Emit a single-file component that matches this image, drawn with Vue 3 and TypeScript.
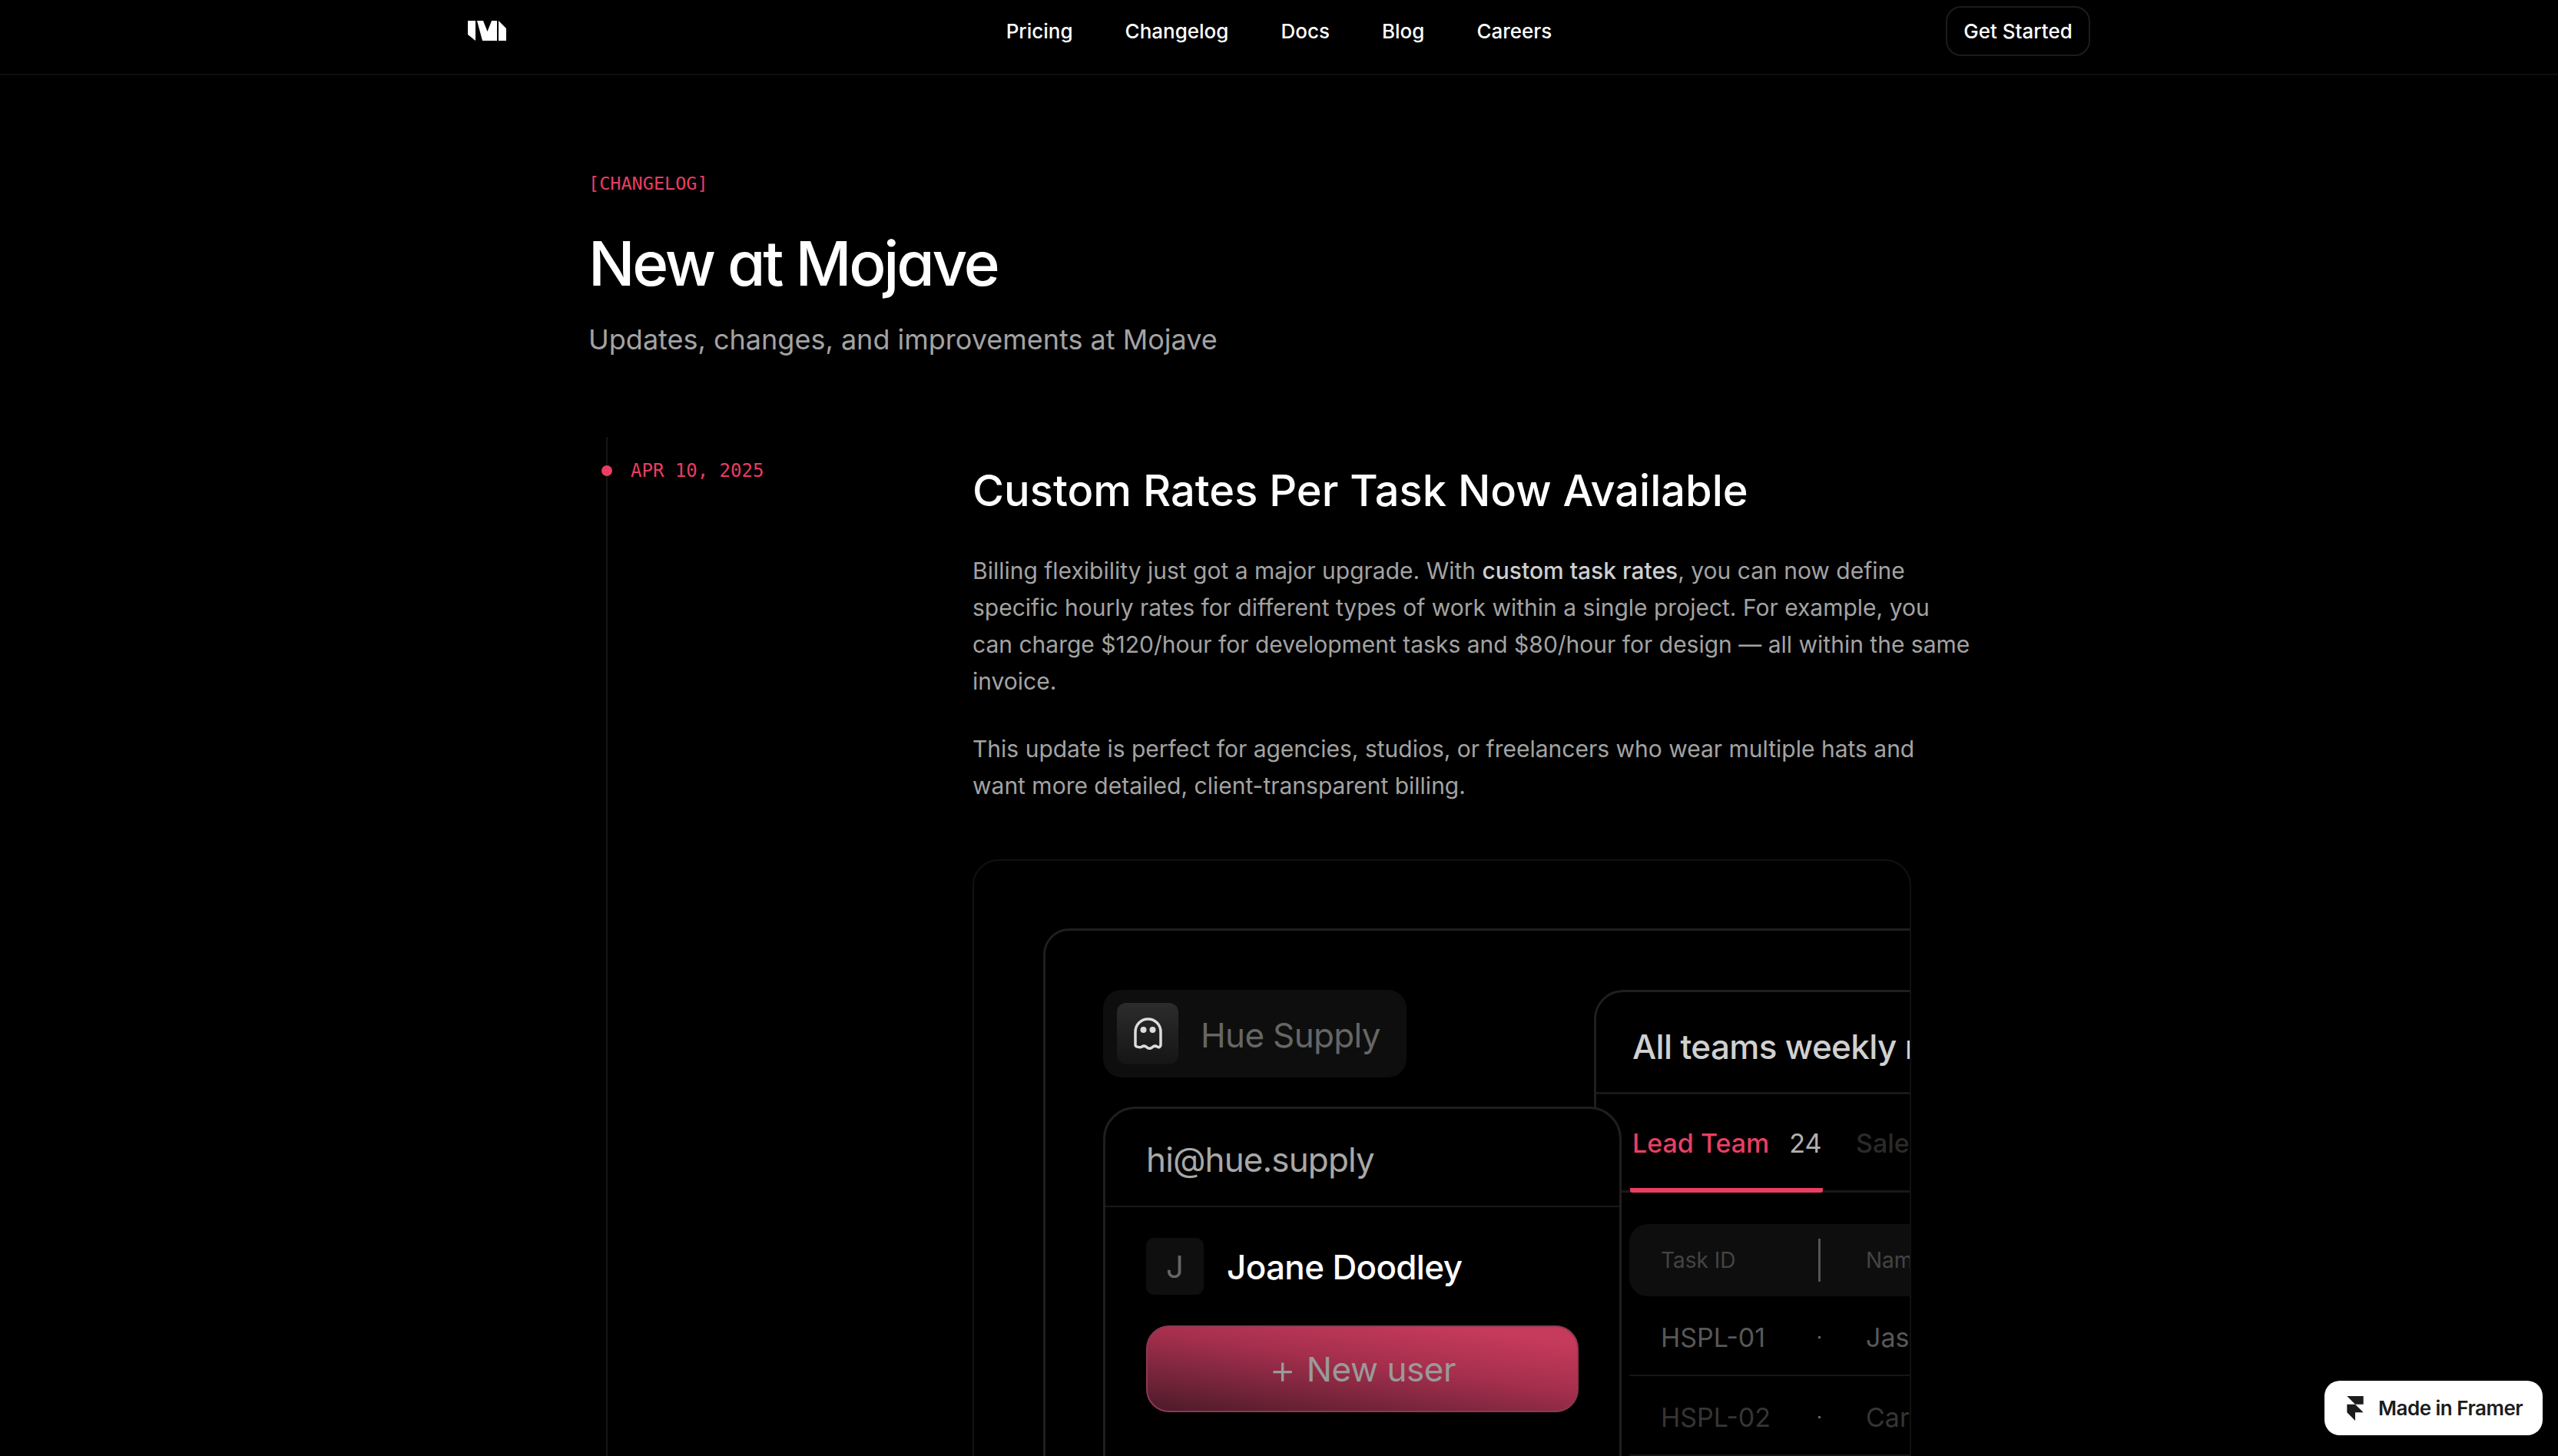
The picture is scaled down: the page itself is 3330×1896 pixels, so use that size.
<script setup lang="ts">
const navLinks: string[] = ['Pricing', 'Changelog', 'Docs', 'Blog', 'Careers'];

const rows: Array<{ id: string; name: string; dim: boolean }> = [
  { id: 'HSPL-01', name: 'Jasmine', dim: false },
  { id: 'HSPL-02', name: 'Carla', dim: true },
];
</script>

<template>
  <div class="page">
    <header class="topbar">
      <div class="topbar-inner">
        <svg class="logo" viewBox="0 0 50 26" aria-label="Mojave">
          <path d="M0 0h10v26L0 18z" />
          <path d="M12 0h8l5.500 14L31 0h7v26H19z" />
          <path d="M40 0l10 10v16H40z" />
        </svg>
        <nav class="nav">
          <a v-for="link in navLinks" :key="link" class="nav-link">{{ link }}</a>
        </nav>
        <a class="cta">Get Started</a>
      </div>
    </header>

    <main class="content">
      <p class="eyebrow">[CHANGELOG]</p>
      <h1 class="title">New at Mojave</h1>
      <p class="subtitle">Updates, changes, and improvements at Mojave</p>

      <section class="entry">
        <div class="timeline">
          <span class="dot"></span>
          <span class="date">APR 10, 2025</span>
        </div>

        <article class="post">
          <h2 class="post-title">Custom Rates Per Task Now Available</h2>
          <p class="post-text">
            Billing flexibility just got a major upgrade. With <strong>custom task rates</strong>, you can now define
            specific hourly rates for different types of work within a single project. For example, you
            can charge $120/hour for development tasks and $80/hour for design — all within the same
            invoice.
          </p>
          <p class="post-text">
            This update is perfect for agencies, studios, or freelancers who wear multiple hats and
            want more detailed, client-transparent billing.
          </p>

          <div class="shot">
            <div class="panel">
              <div class="side">
                <div class="brand">
                  <span class="brand-icon">
                    <svg viewBox="0 0 37 42" width="37" height="42" fill="none">
                      <path
                        d="M2 36V18.500C2 9.400 9.400 2 18.500 2S35 9.400 35 18.500V36c0 2.200-2.400 3.400-4.200 2.200-1.800-1.300-4.200-1.300-6 0l-1 .8c-2 1.500-4.600 1.500-6.600 0l-1-.8c-1.800-1.300-4.200-1.300-6 0C8.400 39.400 2 38.200 2 36z"
                        stroke="#dcdcdc"
                        stroke-width="3.500"
                        stroke-linejoin="round"
                      />
                      <circle cx="12.500" cy="16" r="4" fill="#dcdcdc" />
                      <circle cx="24.500" cy="16" r="4" fill="#dcdcdc" />
                    </svg>
                  </span>
                  <span class="brand-name">Hue Supply</span>
                </div>

                <div class="user-card">
                  <div class="user-mail">hi@hue.supply</div>
                  <div class="user-body">
                    <div class="user-row">
                      <span class="avatar">J</span>
                      <span class="user-name">Joane Doodley</span>
                    </div>
                    <div class="new-user"><span class="plus">+</span> New user</div>
                  </div>
                </div>
              </div>

              <div class="report">
                <div class="report-title">All teams weekly report</div>
                <div class="tabs">
                  <div class="tab-active">
                    <span class="tab-label">Lead Team</span>
                    <span class="tab-count">24</span>
                  </div>
                  <span class="tab-other">Sales Team</span>
                </div>
                <div class="table">
                  <div class="table-head">
                    <span class="col-id">Task ID</span>
                    <span class="col-sep"></span>
                    <span class="col-name">Name</span>
                  </div>
                  <div v-for="row in rows" :key="row.id" class="table-row" :class="{ dim: row.dim }">
                    <span class="col-id">{{ row.id }}</span>
                    <span class="col-point"></span>
                    <span class="col-name">{{ row.name }}</span>
                  </div>
                </div>
              </div>
            </div>
          </div>
        </article>
      </section>
    </main>

    <a class="badge">
      <svg viewBox="0 0 14 21" width="22" height="32" fill="#1c1c1c">
        <path d="M0 0h14v7H7z" />
        <path d="M0 7h7l7 7H7v7l-7-7z" />
      </svg>
      <span>Made in Framer</span>
    </a>
  </div>
</template>

<style>
html,
body {
  margin: 0;
  background: #000;
}
</style>

<style scoped>
.page {
  position: relative;
  height: 1896px;
  overflow: hidden;
  background: #000;
  color: #fff;
  font-family: Inter, 'Noto Sans', sans-serif;
}

.topbar {
  height: 96px;
  border-bottom: 2px solid #0f0f0f;
}
.topbar-inner {
  width: 2112px;
  height: 100%;
  margin: 0 auto;
  display: grid;
  grid-template-columns: 1fr auto 1fr;
  align-items: center;
  padding-bottom: 16px;
  box-sizing: border-box;
}
.logo {
  width: 50px;
  height: 26px;
  fill: #fff;
}
.nav {
  display: flex;
  gap: 68px;
}
.nav-link {
  font-size: 26px;
  font-weight: 500;
}
.cta {
  justify-self: end;
  width: 188px;
  height: 65px;
  display: flex;
  align-items: center;
  justify-content: center;
  box-sizing: border-box;
  border: 2px solid #1c1c1c;
  border-radius: 20px;
  font-size: 26px;
  font-weight: 500;
}

.content {
  width: 1798px;
  margin: 0 auto;
  padding-top: 127px;
}
.eyebrow {
  margin: 0;
  font-family: 'DejaVu Sans Mono', monospace;
  font-size: 23.500px;
  line-height: 28px;
  color: #e93d62;
}
.title {
  margin: 42px 0 0;
  font-size: 80px;
  line-height: 96px;
  font-weight: 500;
  letter-spacing: -0.04em;
  font-feature-settings: 'cv11';
}
.subtitle {
  margin: 27px 0 0;
  font-size: 36px;
  line-height: 48px;
  color: #a3a3a3;
}

.entry {
  position: relative;
  display: grid;
  grid-template-columns: 500px 1fr;
  margin-top: 103px;
}
.entry::before {
  content: '';
  position: absolute;
  left: 23px;
  top: 0;
  bottom: -400px;
  width: 2px;
  background: #161616;
}
.timeline {
  display: flex;
  align-items: center;
  align-self: start;
  gap: 24px;
  padding: 30px 0 0 17px;
  position: relative;
}
.dot {
  width: 14px;
  height: 14px;
  border-radius: 50%;
  background: #ea3e63;
}
.date {
  font-family: 'DejaVu Sans Mono', monospace;
  font-size: 24px;
  line-height: 28px;
  color: #e93d62;
}

.post-title {
  margin: 36px 0 0;
  font-size: 56px;
  line-height: 68px;
  font-weight: 500;
}
.post-text {
  margin: 46px -4px 0 0;
  font-size: 30px;
  line-height: 48px;
  color: #a3a3a3;
}
.post-text + .post-text {
  margin-top: 40px;
}
.post-text strong {
  font-weight: 500;
  color: #cfcfcf;
}

.shot {
  width: 1222px;
  height: 900px;
  margin-top: 72px;
  box-sizing: border-box;
  border: 2px solid #111;
  border-radius: 34px;
  overflow: hidden;
  padding: 88px 0 0 90px;
}
.panel {
  display: flex;
  align-items: flex-start;
  width: 1400px;
  height: 900px;
  box-sizing: border-box;
  border: 3px solid #1f1f1f;
  border-radius: 34px;
  padding: 77px 0 0 75px;
}

.side {
  position: relative;
  z-index: 1;
  width: 675px;
  flex: none;
}
.brand {
  width: 395px;
  height: 114px;
  box-sizing: border-box;
  padding-left: 18px;
  display: flex;
  align-items: center;
  gap: 29px;
  background: #0e0e0e;
  border-radius: 24px;
}
.brand-icon {
  width: 80px;
  height: 80px;
  display: flex;
  align-items: center;
  justify-content: center;
  border-radius: 12px;
  background: linear-gradient(180deg, #2c2c2c, #151515);
}
.brand-name {
  margin-top: 3px;
  font-size: 44px;
  letter-spacing: -0.015em;
  color: #666;
}
.user-card {
  margin-top: 38px;
  height: 500px;
  box-sizing: border-box;
  border: 3px solid #1f1f1f;
  border-radius: 42px;
  background: #000;
}
.user-mail {
  height: 128px;
  box-sizing: border-box;
  padding: 38px 0 0 53px;
  border-bottom: 2px solid #191919;
  font-size: 44px;
  line-height: 56px;
  letter-spacing: -0.02em;
  color: #a8a8a8;
}
.user-body {
  padding: 40px 53px 0;
}
.user-row {
  display: flex;
  align-items: center;
  gap: 30px;
}
.avatar {
  width: 75px;
  height: 74px;
  display: flex;
  align-items: center;
  justify-content: center;
  border-radius: 10px;
  background: #0f0f0f;
  color: #666;
  font-size: 40px;
}
.user-name {
  margin-top: 1px;
  font-size: 44px;
  font-weight: 500;
  letter-spacing: -0.015em;
}
.new-user {
  margin-top: 40px;
  height: 113px;
  display: flex;
  align-items: center;
  justify-content: center;
  gap: 14px;
  border-radius: 30px;
  box-sizing: border-box;
  border: 2px solid #8f3850;
  background: linear-gradient(188deg, #c63a5b 12%, #a52f4d 45%, #702338 78%, #4c1a2a 100%);
  color: #9a9a9a;
  font-size: 44px;
  letter-spacing: -0.01em;
}
.plus {
  font-size: 54px;
  font-weight: 300;
  line-height: 1;
}

.report {
  width: 800px;
  flex: none;
  margin-left: -36px;
  height: 700px;
  box-sizing: border-box;
  border: 3px solid #1f1f1f;
  border-radius: 38px;
}
.report-title {
  height: 133px;
  box-sizing: border-box;
  padding: 44px 0 0 47px;
  border-bottom: 3px solid #191919;
  font-size: 44px;
  line-height: 54px;
  font-weight: 500;
  letter-spacing: -0.015em;
  color: #d0d0d0;
  white-space: nowrap;
}
.tabs {
  height: 128px;
  box-sizing: border-box;
  border-bottom: 3px solid #191919;
  display: flex;
  padding-left: 44px;
  white-space: nowrap;
}
.tab-active {
  width: 251px;
  height: 128px;
  flex: none;
  box-sizing: border-box;
  padding: 42px 0 0 3px;
  border-bottom: 6px solid #ea3e63;
  border-radius: 0 0 3px 3px;
  display: flex;
  gap: 26px;
  font-size: 34px;
  line-height: 44px;
}
.tab-label {
  color: #ea3e63;
  font-weight: 500;
}
.tab-count {
  color: #b0b0b0;
}
.tab-other {
  margin: 42px 0 0 43px;
  font-size: 34px;
  line-height: 44px;
  font-weight: 500;
  color: #2a2a2a;
}
.table {
  padding: 41px 0 0 43px;
}
.table-head {
  height: 94px;
  display: flex;
  align-items: center;
  background: #0e0e0e;
  border-radius: 24px;
  padding-left: 41px;
  font-size: 28px;
  color: #444;
}
.col-id {
  width: 205px;
}
.col-sep {
  width: 3px;
  height: 56px;
  background: #555;
}
.col-name {
  margin-left: 59px;
  white-space: nowrap;
}
.table-row {
  height: 104px;
  display: flex;
  align-items: center;
  box-sizing: border-box;
  padding: 5px 0 0 41px;
  border-bottom: 2px solid #161616;
  font-size: 34px;
  color: #585858;
}
.table-row.dim {
  color: #353535;
}
.col-point {
  width: 3px;
  height: 3px;
  background: #666;
}

.badge {
  position: absolute;
  left: 3026px;
  top: 1798px;
  width: 284px;
  height: 71px;
  display: flex;
  align-items: center;
  box-sizing: border-box;
  padding-left: 29px;
  gap: 19px;
  background: #fff;
  border-radius: 20px;
  color: #1c1c1c;
  font-size: 26px;
  font-weight: 600;
  letter-spacing: -0.5px;
}
</style>
